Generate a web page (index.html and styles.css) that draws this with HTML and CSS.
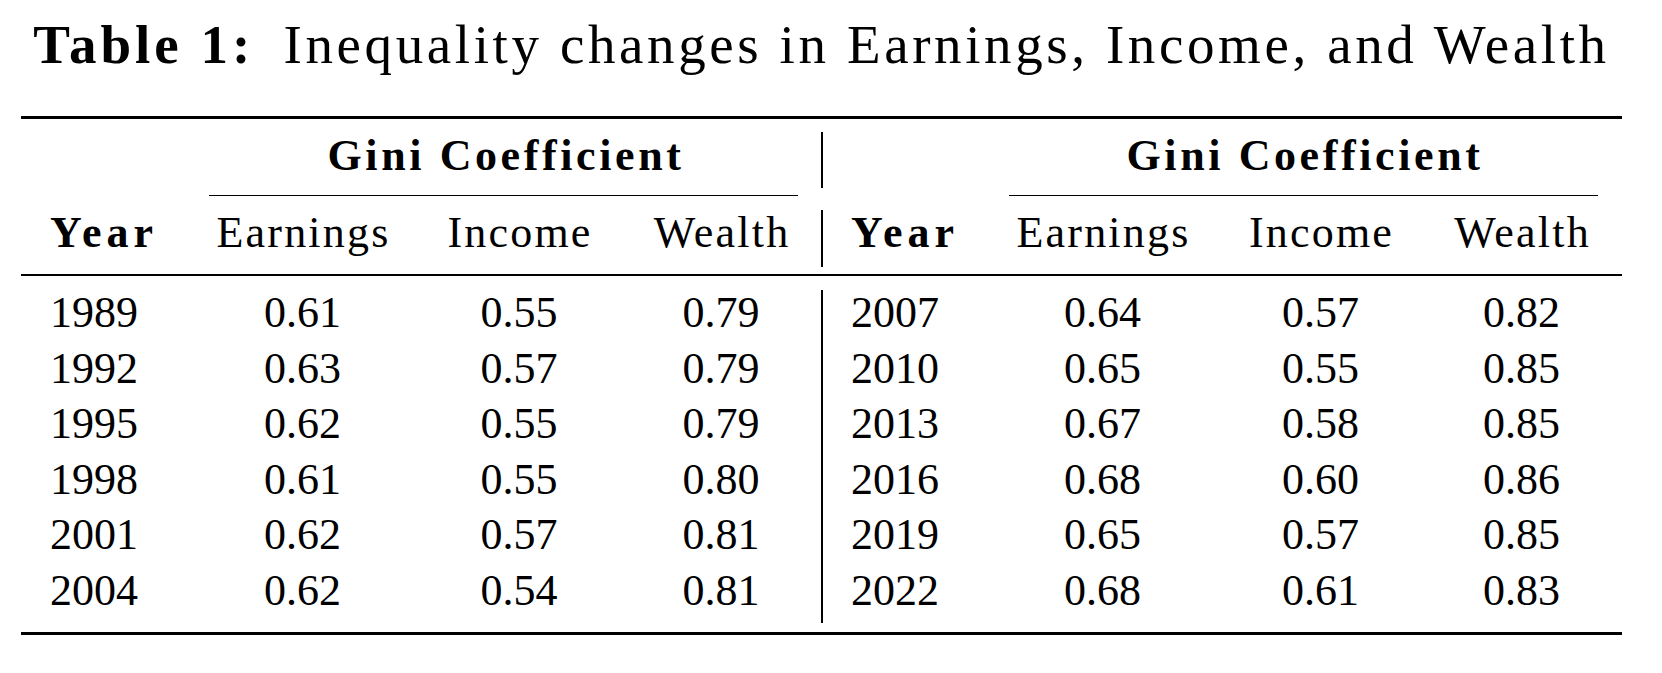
FILE: index.html
```html
<!DOCTYPE html>
<html lang="en">
<head>
<meta charset="utf-8">
<title>Table 1: Inequality changes in Earnings, Income, and Wealth</title>
<link rel="stylesheet" href="styles.css">
</head>
<body>
<div class="page">
  <div class="caption"><span class="cap-label">Table 1:</span> Inequality changes in Earnings, Income, and Wealth</div>
  <div class="table">
    <div class="rule rule-top"></div>

    <div class="row head1">
      <div class="cell"></div>
      <div class="cell group">Gini Coefficient</div>
      <div class="cell sep"></div>
      <div class="cell group group-r">Gini Coefficient</div>
    </div>

    <div class="row cmid">
      <div class="cmidrule cmid-l"></div>
      <div class="cmidrule cmid-r"></div>
    </div>

    <div class="row head2">
      <div class="cell year bold">Year</div>
      <div class="cell num label">Earnings</div>
      <div class="cell num label">Income</div>
      <div class="cell num label">Wealth</div>
      <div class="cell year sep bold">Year</div>
      <div class="cell num label">Earnings</div>
      <div class="cell num label">Income</div>
      <div class="cell num label">Wealth</div>
    </div>

    <div class="rule-gap"><div class="rule rule-mid"></div></div>

    <div class="body">
      <div class="row data">
        <div class="cell year">1989</div><div class="cell num">0.61</div><div class="cell num">0.55</div><div class="cell num">0.79</div>
        <div class="cell year sep">2007</div><div class="cell num">0.64</div><div class="cell num">0.57</div><div class="cell num">0.82</div>
      </div>
      <div class="row data">
        <div class="cell year">1992</div><div class="cell num">0.63</div><div class="cell num">0.57</div><div class="cell num">0.79</div>
        <div class="cell year sep">2010</div><div class="cell num">0.65</div><div class="cell num">0.55</div><div class="cell num">0.85</div>
      </div>
      <div class="row data">
        <div class="cell year">1995</div><div class="cell num">0.62</div><div class="cell num">0.55</div><div class="cell num">0.79</div>
        <div class="cell year sep">2013</div><div class="cell num">0.67</div><div class="cell num">0.58</div><div class="cell num">0.85</div>
      </div>
      <div class="row data">
        <div class="cell year">1998</div><div class="cell num">0.61</div><div class="cell num">0.55</div><div class="cell num">0.80</div>
        <div class="cell year sep">2016</div><div class="cell num">0.68</div><div class="cell num">0.60</div><div class="cell num">0.86</div>
      </div>
      <div class="row data">
        <div class="cell year">2001</div><div class="cell num">0.62</div><div class="cell num">0.57</div><div class="cell num">0.81</div>
        <div class="cell year sep">2019</div><div class="cell num">0.65</div><div class="cell num">0.57</div><div class="cell num">0.85</div>
      </div>
      <div class="row data">
        <div class="cell year">2004</div><div class="cell num">0.62</div><div class="cell num">0.54</div><div class="cell num">0.81</div>
        <div class="cell year sep">2022</div><div class="cell num">0.68</div><div class="cell num">0.61</div><div class="cell num">0.83</div>
      </div>
    </div>

    <div class="rule rule-bottom"></div>
  </div>
</div>
</body>
</html>
```

FILE: styles.css
```css
html, body {
  margin: 0;
  padding: 0;
  background: #ffffff;
}

body {
  font-family: "Liberation Serif", "Times New Roman", serif;
  color: #000000;
}

.page {
  width: 1662px;
  height: 673px;
  overflow: hidden;
}

.caption {
  width: 1601px;
  margin-left: 21px;
  padding-top: 17px;
  font-size: 55px;
  line-height: 55px;
  text-align: center;
  letter-spacing: 3.6px;
  white-space: nowrap;
}

.cap-label {
  font-weight: bold;
  letter-spacing: 4px;
  margin-right: 12px;
}

.table {
  width: 1601px;
  margin-left: 21px;
  margin-top: 44px;
  font-size: 44px;
}

.rule {
  background: #000000;
}

.rule-top {
  height: 3px;
  margin-bottom: 13px;
}

.rule-bottom {
  height: 3px;
  margin-top: 9px;
}

.rule-gap {
  height: 23px;
  padding-top: 7px;
  box-sizing: border-box;
}

.rule-mid {
  height: 2px;
}

.row {
  display: grid;
  grid-template-columns: 167px 229px 204px 200px 164px 235px 201px 201px;
}

.cell {
  white-space: nowrap;
}

.sep {
  border-left: 2px solid #000000;
}

.head1 .cell {
  line-height: 48px;
  padding-bottom: 8px;
}

.head1 .group {
  grid-column: 2 / 5;
  text-align: center;
  font-weight: bold;
  letter-spacing: 3.6px;
  text-indent: 3px;
}

.head1 .group-r {
  grid-column: 6 / 9;
}

.cmid {
  height: 22px;
  padding-top: 7px;
  box-sizing: border-box;
}

.cmidrule {
  height: 1px;
  background: #000000;
}

.cmid-l {
  grid-column: 2 / 5;
  margin: 0 23px 0 21px;
}

.cmid-r {
  grid-column: 6 / 9;
  margin: 0 24px 0 24px;
}

.head2 .cell {
  line-height: 46px;
  padding-bottom: 11px;
}

.data .cell {
  line-height: 46px;
  padding-bottom: 9.5px;
}

.year {
  padding-left: 29px;
  text-align: left;
}

.year.sep {
  padding-left: 28px;
}

.num {
  text-align: center;
}

.bold {
  font-weight: bold;
  letter-spacing: 5px;
}

.label {
  letter-spacing: 2.2px;
  text-indent: 2px;
}
```
